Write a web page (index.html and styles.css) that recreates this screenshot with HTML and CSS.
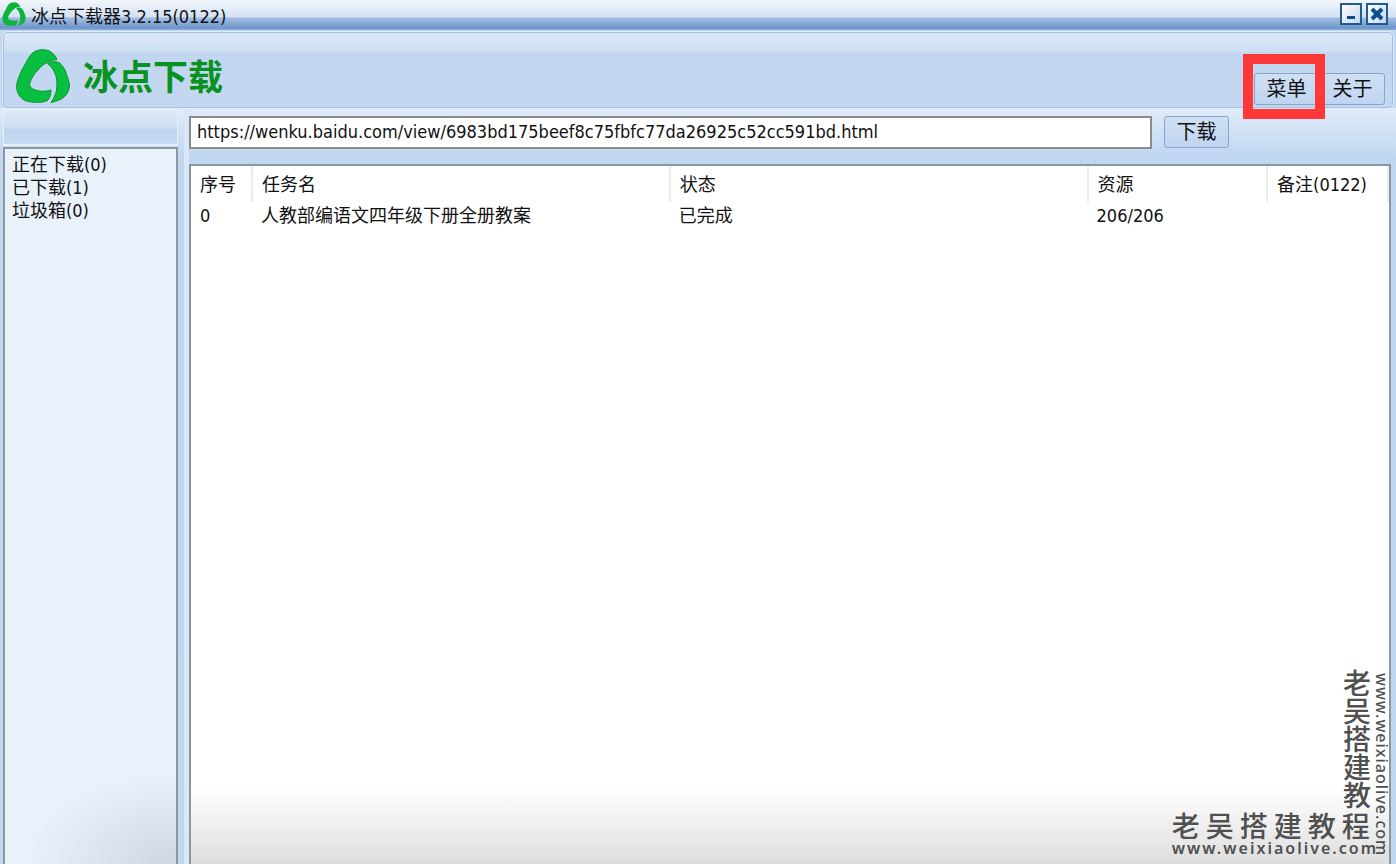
FILE: index.html
```html
<!DOCTYPE html>
<html lang="zh-CN">
<head>
<meta charset="utf-8">
<meta name="viewport" content="width=device-width, initial-scale=1">
<title>冰点下载器3.2.15(0122)</title>
<link rel="stylesheet" href="styles.css">
</head>
<body>
<svg class="defs" aria-hidden="true">
  <symbol id="logo" viewBox="0 0 54 54">
    <path d="M19 2.500C24 0 31 0 35 3C38 5 40 8 41 10.500C36 11 33 12 30 14C27 16 24 18 22 21C19 24 17 27 15.500 30C12 36 14 39 18 40.500C24 43 30 42.500 35 41C35 45 34 48 32 51C29 54 15 54 9 51.500C2 48-1 40 1.500 32C3 27 6 20 9 15.500C12 10 14 5 19 2.500Z"/>
    <path d="M31.500 14.500C35 12.500 39 12 43 13.500C46 16 48 19 49.500 22C51 27 53 32 53.500 36C53 46 47 51 35 53.500C38 49 40 45 40.500 41C42 31 40 21 31.500 14.500Z"/>
  </symbol>
</svg>
<div class="window">
  <header class="titlebar">
    <svg class="titlebar-icon" aria-hidden="true"><use href="#logo"/></svg>
    <h1 class="titlebar-text">冰点下载器3.2.15(0122)</h1>
    <button class="window-button" type="button" aria-label="最小化">
      <svg viewBox="0 0 18 18" aria-hidden="true"><path d="M5 12.500H13" stroke="currentColor" stroke-width="3"/></svg>
    </button>
    <button class="window-button" type="button" aria-label="关闭">
      <svg viewBox="0 0 18 18" aria-hidden="true"><path d="M4 4L14 14M14 4L4 14" stroke="currentColor" stroke-width="4"/></svg>
    </button>
  </header>
  <section class="banner">
    <svg class="banner-logo" aria-hidden="true"><use href="#logo"/></svg>
    <p class="banner-name">冰点下载</p>
    <nav class="banner-nav" aria-label="主菜单">
      <div class="highlighted"><button class="button" type="button">菜单</button></div>
      <button class="button" type="button">关于</button>
    </nav>
  </section>
  <div class="workspace">
    <aside class="sidebar">
      <div class="sidebar-head"></div>
      <ul class="folders">
        <li>正在下载(0)</li>
        <li>已下载(1)</li>
        <li>垃圾箱(0)</li>
      </ul>
    </aside>
    <main class="content">
      <form class="toolbar">
        <input class="address" type="text" aria-label="下载地址" value="https://wenku.baidu.com/view/6983bd175beef8c75fbfc77da26925c52cc591bd.html">
        <button class="button" type="button">下载</button>
      </form>
      <div class="list">
        <table class="tasks">
          <colgroup><col class="col-index"><col class="col-name"><col class="col-state"><col class="col-source"><col class="col-note"></colgroup>
          <thead>
            <tr><th>序号</th><th>任务名</th><th>状态</th><th>资源</th><th>备注(0122)</th></tr>
          </thead>
          <tbody>
            <tr><td>0</td><td>人教部编语文四年级下册全册教案</td><td>已完成</td><td>206/206</td><td></td></tr>
          </tbody>
        </table>
      </div>
    </main>
  </div>
  <div class="mark mark-side">
    <span class="mark-name">老吴搭建教</span>
    <span class="mark-site">www.weixiaolive.com</span>
  </div>
  <div class="mark mark-bottom">
    <span class="mark-name">老吴搭建教程</span>
    <span class="mark-site">www.weixiaolive.com</span>
  </div>
</div>
</body>
</html>
```
FILE: styles.css
```css
* {
  box-sizing: border-box;
}

body {
  margin: 0;
  font: 18px/24px "DejaVu Sans Condensed", "Noto Sans CJK SC", sans-serif;
  color: #111;
}

h1, p, ul {
  margin: 0;
  padding: 0;
}

button, input {
  font: inherit;
  color: inherit;
}

.defs {
  position: absolute;
  width: 0;
  height: 0;
}

.window {
  position: relative;
  display: flex;
  flex-direction: column;
  height: 100vh;
  overflow: hidden;
  background: #c3d8f1;
}

.titlebar {
  display: flex;
  flex: none;
  align-items: center;
  gap: 4px;
  height: 30px;
  padding: 0 8px 2px 2px;
  background: linear-gradient(#f2f6fc, #d5e2f3 55%, #a3bfe2 60%, #6e96cb 92%, #88aad6);
}

.titlebar-icon {
  width: 24px;
  height: 24px;
  fill: #0cb43c;
}

.titlebar-text {
  flex: 1;
  padding: 6px 0 0 1px;
  font-size: 18px;
  font-weight: 400;
  line-height: 24px;
}

.window-button {
  display: block;
  width: 22px;
  height: 22px;
  padding: 0;
  border: 2px solid #1f5c8f;
  background: linear-gradient(135deg, #fff, #c3d6ea);
  color: #07528e;
}

.window-button svg {
  display: block;
  width: 18px;
  height: 18px;
}

.banner {
  display: flex;
  flex: none;
  align-items: center;
  height: 76px;
  margin: 2px 3px 0;
  padding: 12px 7px 0 12px;
  border: 1px solid #a5c2e0;
  border-radius: 4px;
  box-shadow: 0 0 0 1px #dce9f7;
  background: linear-gradient(#dce8f6, #cfe0f4 18px, #c2d6f1 20px, #c5d7f0);
}

.banner-logo {
  width: 54px;
  height: 54px;
  fill: #08bf40;
  stroke: #07962e;
  stroke-width: 1px;
}

.banner-name {
  padding: 0 0 2px 13px;
  font: 700 35px/48px "Noto Sans CJK SC", sans-serif;
  color: #089222;
}

.banner-nav {
  display: flex;
  gap: 1px;
  margin-left: auto;
  padding-top: 26px;
}

.button {
  display: block;
  width: 65px;
  height: 32px;
  padding: 0;
  border: 1px solid #86a5cd;
  border-radius: 3px;
  background: linear-gradient(#cfe0f4, #bfd4f0);
  font-size: 20px;
  line-height: 28px;
}

.highlighted {
  position: relative;
}

.highlighted::after {
  content: "";
  position: absolute;
  inset: -19px -6px -14px -11px;
  border: 10px solid #fc3838;
}

.workspace {
  display: grid;
  flex: 1;
  grid-template-columns: 175px 1fr;
  gap: 11px;
  min-height: 0;
  padding: 1px 5px 0 3px;
  background: linear-gradient(#e0ebf8, #cfe0f4 26px, #bfd6f1 50px, #c1d8f1);
}

.sidebar {
  display: flex;
  flex-direction: column;
}

.sidebar-head {
  height: 37px;
  border: 1px solid #e4f0fb;
  border-bottom-width: 2px;
  border-radius: 4px 4px 0 0;
  background: linear-gradient(#dce9f7, #cfdff3 50%, #bed3ef 60%, #c6daf2);
}

.folders {
  flex: 1;
  margin-top: 1px;
  padding: 4px 7px;
  border: 2px solid #8e969f;
  border-bottom: 0;
  background: radial-gradient(ellipse 150px 90px at 100% 100%, #cfd6df, #e9f1fa);
  list-style: none;
  line-height: 23px;
}

.content {
  display: flex;
  flex-direction: column;
  min-width: 0;
  box-shadow: -5px 0 0 #d9e8f7;
}

.toolbar {
  display: flex;
  gap: 12px;
  padding: 7px 162px 15px 0;
}

.toolbar .button {
  flex: none;
}

.address {
  flex: 1;
  min-width: 0;
  height: 33px;
  padding: 0 6px 3px;
  border: 2px solid #8c8c8c;
  background: #fff;
}

.list {
  flex: 1;
  border: 2px solid #8d959e;
  border-bottom: 0;
  background: linear-gradient(to top, #dedede, #fff 76px);
}

.tasks {
  width: 100%;
  table-layout: fixed;
  border-collapse: collapse;
}

.col-index {
  width: 5.1%;
}

.col-name, .col-state {
  width: 34.9%;
}

.col-source {
  width: 15%;
}

.tasks th, .tasks td {
  padding: 2px 0 0 9px;
  font-weight: 400;
  text-align: left;
  white-space: nowrap;
}

.tasks th {
  height: 36px;
  border-right: 2px solid #ececec;
}

.tasks td {
  height: 26px;
}

.mark {
  position: absolute;
  display: flex;
  color: #505050;
}

.mark-name {
  font: 500 28px/28px "Noto Sans CJK SC", sans-serif;
  letter-spacing: 6px;
}

.mark-site {
  font: 600 16px/18px "Noto Sans", sans-serif;
  letter-spacing: 2px;
}

.mark-bottom {
  right: 18px;
  bottom: 7px;
  flex-direction: column;
}

.mark-side {
  right: 5px;
  bottom: 8px;
  flex-direction: column-reverse;
  gap: 2px;
  writing-mode: vertical-rl;
}

.mark-side .mark-name {
  letter-spacing: 0;
}

.mark-side .mark-site {
  padding-top: 4px;
  font-weight: 500;
  letter-spacing: 1px;
}
```
